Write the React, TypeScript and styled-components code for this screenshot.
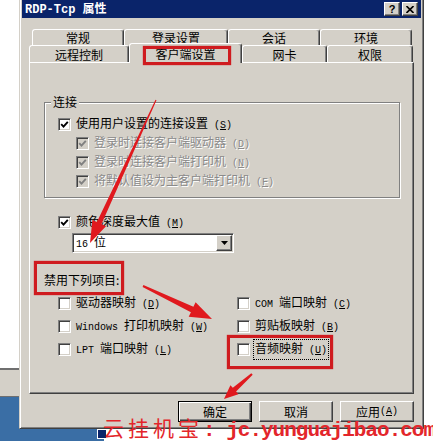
import React from "react";
import styled, { createGlobalStyle } from "styled-components";

const FACE = "#d4d0c8";
const SHADOW = "#808080";
const DARK = "#404040";
const RED = "#cf1b1f";
const CJK = `"Noto Sans CJK SC", "Noto Sans", sans-serif`;
const MONO = `"Liberation Mono", "Noto Sans CJK SC", monospace`;

const GlobalStyle = createGlobalStyle`
  html, body { margin: 0; padding: 0; background: #fff; }
  body { font-family: ${CJK}; font-size: 12px; color: #000; }
`;

const Desktop = styled.div`
  position: relative;
  width: 433px;
  height: 441px;
  overflow: hidden;
  background: #fff;
`;

// bits of the desktop behind the dialog
const BlueStrip = styled.div`
  position: absolute;
  left: 0;
  top: 397px;
  width: 104px;
  height: 44px;
  background: #3a6ea5;
`;
const OtherWindow = styled.div`
  position: absolute;
  left: 0;
  top: 368px;
  width: 19px;
  height: 29px;
  box-sizing: border-box;
  background: ${FACE};
  border-top: 2px solid #6f6f6f;
  border-bottom: 1px solid #6f6f6f;
`;
const TrayIcon = styled.div`
  position: absolute;
  left: 97px;
  top: 429px;
  width: 10px;
  height: 10px;
  background: #0a246a;
  border: 1px solid #fff;
  box-sizing: border-box;
`;

const Dialog = styled.div`
  position: absolute;
  left: 19px;
  top: 0;
  width: 405px;
  height: 429px;
  box-sizing: border-box;
  display: flex;
  flex-direction: column;
  background: ${FACE};
  border-style: solid;
  border-width: 0 1px 1px 1px;
  border-color: ${DARK} ${DARK} ${DARK} ${FACE};
  box-shadow: inset 1px 0 #fff, inset -1px -1px ${SHADOW};
  padding: 0 2px 2px 2px;
`;

const TitleBar = styled.div`
  height: 18px;
  flex: none;
  background: #0a246a;
  display: flex;
  align-items: center;
  justify-content: space-between;
  padding: 0 3px;
`;
const TitleText = styled.div`
  color: #fff;
  font-weight: bold;
  font-size: 12px;
  white-space: pre;
  line-height: 14px;
`;
const TitleLatin = styled.span`
  font-family: ${MONO};
  font-size: 12px;
`;
const CaptionButtons = styled.div`
  display: flex;
  gap: 2px;
`;
const CaptionButton = styled.div`
  width: 16px;
  height: 14px;
  box-sizing: border-box;
  background: ${FACE};
  border: 1px solid;
  border-color: #fff ${DARK} ${DARK} #fff;
  box-shadow: inset -1px -1px ${SHADOW};
  display: flex;
  align-items: center;
  justify-content: center;
  font-family: "Liberation Sans", sans-serif;
  font-weight: bold;
  font-size: 11px;
  line-height: 10px;
`;

const Body = styled.div`
  flex: 1;
  display: flex;
  flex-direction: column;
  padding: 11px 7px 4px 7px;
`;

const TabRow = styled.div<{ $offset: number; $height: number }>`
  display: flex;
  align-items: flex-end;
  height: ${(p) => p.$height}px;
  margin-left: ${(p) => p.$offset}px;
`;
const Tab = styled.div<{ $w: number; $selected?: boolean }>`
  position: relative;
  width: ${(p) => p.$w}px;
  height: ${(p) => (p.$selected ? "20px" : "100%")};
  margin-bottom: ${(p) => (p.$selected ? "-1px" : "0")};
  z-index: ${(p) => (p.$selected ? 2 : 0)};
  padding-top: ${(p) => (p.$selected ? "0" : "1px")};
  box-sizing: border-box;
  background: ${FACE};
  border: 1px solid;
  border-bottom: none;
  border-color: #fff ${DARK} transparent #fff;
  border-radius: 3px 3px 0 0;
  box-shadow: inset -1px 0 ${SHADOW};
  display: flex;
  align-items: center;
  justify-content: center;
  line-height: 14px;
  white-space: nowrap;
`;

const Panel = styled.div`
  height: 332px;
  box-sizing: border-box;
  border: 1px solid;
  border-color: #fff ${DARK} ${DARK} #fff;
  box-shadow: inset -1px -1px ${SHADOW};
  padding: 39px 13px 0 14px;
`;

const Group = styled.div`
  position: relative;
  border: 1px solid ${SHADOW};
  box-shadow: inset 1px 1px #fff, 1px 1px #fff;
  padding: 12px 0 6px 13px;
`;
const GroupTitle = styled.span`
  position: absolute;
  top: -8px;
  left: 6px;
  padding: 0 2px;
  background: ${FACE};
  line-height: 14px;
`;

const Row = styled.div<{ $indent?: number; $top?: number; $disabled?: boolean }>`
  position: relative;
  display: flex;
  align-items: center;
  gap: 5px;
  height: 19px;
  margin-left: ${(p) => p.$indent ?? 0}px;
  margin-top: ${(p) => p.$top ?? 0}px;
  color: ${(p) => (p.$disabled ? "#8a8a8a" : "#000")};
  text-shadow: ${(p) => (p.$disabled ? "1px 1px 0 #fff" : "none")};
  white-space: nowrap;
  line-height: 14px;
`;

const Box = styled.span<{ $disabled?: boolean }>`
  flex: none;
  width: 13px;
  height: 13px;
  box-sizing: border-box;
  border: 1px solid;
  border-color: ${SHADOW} #fff #fff ${SHADOW};
  box-shadow: inset 1px 1px ${DARK}, inset -1px -1px ${FACE};
  background: ${(p) => (p.$disabled ? FACE : "#fff")};
  display: flex;
  align-items: center;
  justify-content: center;
`;

const Mono = styled.span`
  font-family: ${MONO};
  font-size: 10px;
`;

const Focus = styled.span`
  outline: 1px dotted #000;
  outline-offset: 1px;
`;

const Combo = styled.div`
  margin: 1px 0 0 28px;
  width: 162px;
  height: 20px;
  box-sizing: border-box;
  background: #fff;
  border: 1px solid;
  border-color: ${SHADOW} #fff #fff ${SHADOW};
  box-shadow: inset 1px 1px ${DARK}, inset -1px -1px ${FACE};
  display: flex;
  align-items: center;
  justify-content: space-between;
  padding: 1px 1px 1px 3px;
  line-height: 14px;
`;
const ComboButton = styled.div`
  width: 16px;
  height: 16px;
  box-sizing: border-box;
  background: ${FACE};
  border: 1px solid;
  border-color: #fff ${DARK} ${DARK} #fff;
  box-shadow: inset -1px -1px ${SHADOW};
  display: flex;
  align-items: center;
  justify-content: center;
`;

const Options = styled.div`
  display: grid;
  grid-template-columns: 179px auto;
  grid-auto-rows: 23px;
  margin: 3px 0 0 14px;
`;
const Option = styled.div`
  position: relative;
  display: flex;
  align-items: center;
  gap: 5px;
  white-space: nowrap;
  line-height: 14px;
`;

const RedBox = styled.div<{ $top: number; $left: number; $w: number; $h: number }>`
  position: absolute;
  top: ${(p) => p.$top}px;
  left: ${(p) => p.$left}px;
  width: ${(p) => p.$w}px;
  height: ${(p) => p.$h}px;
  box-sizing: border-box;
  border: 3px solid ${RED};
  box-shadow: 0 0 1px ${RED};
  pointer-events: none;
  z-index: 3;
`;

const ButtonRow = styled.div`
  display: flex;
  justify-content: flex-end;
  gap: 7px;
  margin-top: 7px;
`;
const Button = styled.div<{ $default?: boolean }>`
  width: 74px;
  height: 21px;
  box-sizing: border-box;
  background: ${FACE};
  border: 1px solid;
  border-color: ${(p) => (p.$default ? "#000" : `#fff ${DARK} ${DARK} #fff`)};
  box-shadow: ${(p) =>
    p.$default
      ? `inset 1px 1px #fff, inset -1px -1px ${DARK}, inset -2px -2px ${SHADOW}`
      : `inset -1px -1px ${SHADOW}`};
  display: flex;
  align-items: center;
  justify-content: center;
  line-height: 14px;
  white-space: nowrap;
`;

const Overlay = styled.svg`
  position: absolute;
  left: 0;
  top: 0;
  z-index: 5;
  pointer-events: none;
`;

const Watermark = styled.div`
  position: absolute;
  left: 103px;
  top: 416px;
  z-index: 6;
  color: #e3262b;
  line-height: 22px;
  white-space: pre;
`;
const WatermarkCjk = styled.span`
  font-family: ${CJK};
  font-size: 21px;
  letter-spacing: 4px;
`;
const WatermarkLatin = styled.span`
  font-family: ${MONO};
  font-size: 21px;
  font-weight: bold;
  letter-spacing: -1px;
`;

const Check = ({ color }: { color: string }) => (
  <svg width="9" height="9" viewBox="0 0 9 9">
    <path d="M1.2 4.2 L3.5 6.6 L7.8 1.8" stroke={color} strokeWidth="1.9" fill="none" />
  </svg>
);

const CheckBox = ({ checked, disabled }: { checked?: boolean; disabled?: boolean }) => (
  <Box $disabled={disabled}>{checked && <Check color={disabled ? SHADOW : "#000"} />}</Box>
);

const Key = ({ k }: { k: string }) => (
  <Mono>
    {" "}(<u>{k}</u>)
  </Mono>
);

function arrowPoints(x1: number, y1: number, x2: number, y2: number, w0: number, w1: number, hl: number, hw: number) {
  const dx = x2 - x1;
  const dy = y2 - y1;
  const len = Math.hypot(dx, dy);
  const ux = dx / len;
  const uy = dy / len;
  const nx = -uy;
  const ny = ux;
  const bx = x2 - ux * hl;
  const by = y2 - uy * hl;
  const p = (x: number, y: number) => `${x.toFixed(1)},${y.toFixed(1)}`;
  return [
    p(x1 + (nx * w0) / 2, y1 + (ny * w0) / 2),
    p(bx + (nx * w1) / 2, by + (ny * w1) / 2),
    p(bx + (nx * hw) / 2, by + (ny * hw) / 2),
    p(x2, y2),
    p(bx - (nx * hw) / 2, by - (ny * hw) / 2),
    p(bx - (nx * w1) / 2, by - (ny * w1) / 2),
    p(x1 - (nx * w0) / 2, y1 - (ny * w0) / 2),
  ].join(" ");
}

const arrows = [
  [156, 100, 90, 243, 1, 5, 22, 15],
  [143, 286, 212, 319, 2, 6, 22, 16],
  [252, 374, 224, 399, 2, 5, 14, 12],
];

const topTabs = [
  { label: "常规", w: 92 },
  { label: "登录设置", w: 104 },
  { label: "会话", w: 92 },
  { label: "环境", w: 92 },
];

const leftOptions = [
  { text: "驱动器映射", key: "D" },
  { text: <><Mono>Windows </Mono>打印机映射</>, key: "W" },
  { text: <><Mono>LPT </Mono>端口映射</>, key: "L" },
];

export default function App() {
  return (
    <Desktop>
      <GlobalStyle />
      <BlueStrip />
      <OtherWindow />
      <TrayIcon />

      <Dialog>
        <TitleBar>
          <TitleText>
            <TitleLatin>RDP-Tcp </TitleLatin>属性
          </TitleText>
          <CaptionButtons>
            <CaptionButton>?</CaptionButton>
            <CaptionButton>
              <svg width="8" height="7" viewBox="0 0 8 7">
                <path d="M0.5 0 L7.5 7 M7.5 0 L0.5 7" stroke="#000" strokeWidth="1.6" />
              </svg>
            </CaptionButton>
          </CaptionButtons>
        </TitleBar>

        <Body>
          <TabRow $offset={3} $height={16}>
            {topTabs.map((t) => (
              <Tab key={t.label} $w={t.w}>
                {t.label}
              </Tab>
            ))}
          </TabRow>
          <TabRow $offset={0} $height={17}>
            <Tab $w={100}>远程控制</Tab>
            <Tab $w={113} $selected>
              客户端设置
              <RedBox $top={2} $left={13} $w={88} $h={19} />
            </Tab>
            <Tab $w={85}>网卡</Tab>
            <Tab $w={86}>权限</Tab>
          </TabRow>

          <Panel>
            <Group>
              <GroupTitle>连接</GroupTitle>
              <Row>
                <CheckBox checked />
                <span>
                  使用用户设置的连接设置<Key k="S" />
                </span>
              </Row>
              <Row $indent={18} $disabled>
                <CheckBox checked disabled />
                <span>
                  登录时连接客户端驱动器<Key k="D" />
                </span>
              </Row>
              <Row $indent={18} $disabled>
                <CheckBox checked disabled />
                <span>
                  登录时连接客户端打印机<Key k="N" />
                </span>
              </Row>
              <Row $indent={18} $disabled>
                <CheckBox checked disabled />
                <span>
                  将默认值设为主客户端打印机<Key k="F" />
                </span>
              </Row>
            </Group>

            <Row $indent={14} $top={15}>
              <CheckBox checked />
              <span>
                颜色深度最大值<Key k="M" />
              </span>
            </Row>
            <Combo>
              <span>
                <Mono>16 </Mono>位
              </span>
              <ComboButton>
                <svg width="7" height="4" viewBox="0 0 7 4">
                  <polygon points="0,0 7,0 3.5,4" fill="#000" />
                </svg>
              </ComboButton>
            </Combo>

            <Row $top={17}>
              <span>禁用下列项目:</span>
              <RedBox $top={-9} $left={-10} $w={90} $h={34} />
            </Row>

            <Options>
              <Option>
                <CheckBox />
                <span>
                  {leftOptions[0].text}
                  <Key k={leftOptions[0].key} />
                </span>
              </Option>
              <Option>
                <CheckBox />
                <span>
                  <Mono>COM </Mono>端口映射<Key k="C" />
                </span>
              </Option>
              <Option>
                <CheckBox />
                <span>
                  {leftOptions[1].text}
                  <Key k={leftOptions[1].key} />
                </span>
              </Option>
              <Option>
                <CheckBox />
                <span>
                  剪贴板映射<Key k="B" />
                </span>
              </Option>
              <Option>
                <CheckBox />
                <span>
                  {leftOptions[2].text}
                  <Key k={leftOptions[2].key} />
                </span>
              </Option>
              <Option>
                <CheckBox />
                <Focus>
                  音频映射<Key k="U" />
                </Focus>
                <RedBox $top={-3} $left={-10} $w={106} $h={34} />
              </Option>
            </Options>
          </Panel>

          <ButtonRow>
            <Button $default>确定</Button>
            <Button>取消</Button>
            <Button>
              应用<Key k="A" />
            </Button>
          </ButtonRow>
        </Body>
      </Dialog>

      <Overlay width="433" height="441" viewBox="0 0 433 441">
        {arrows.map((a, i) => (
          <polygon
            key={i}
            points={arrowPoints(a[0], a[1], a[2], a[3], a[4], a[5], a[6], a[7])}
            fill="#e0191e"
          />
        ))}
      </Overlay>

      <Watermark>
        <WatermarkCjk>云挂机宝</WatermarkCjk>
        <WatermarkLatin>: jc.yunguajibao.com</WatermarkLatin>
      </Watermark>
    </Desktop>
  );
}
